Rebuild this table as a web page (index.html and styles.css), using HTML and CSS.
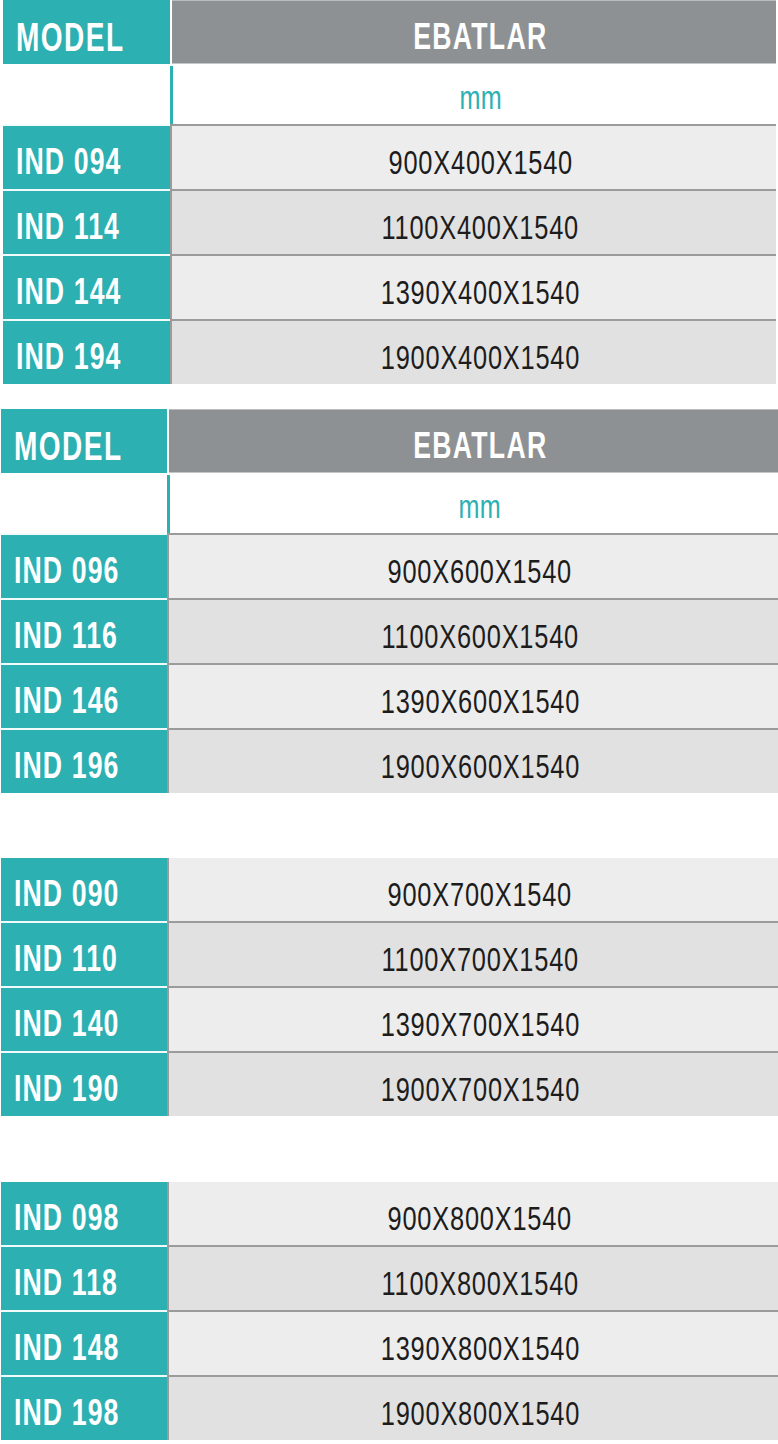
FILE: index.html
```html
<!DOCTYPE html>
<html lang="tr">
<head>
<meta charset="utf-8">
<title>Model Ebatlar</title>
<link rel="stylesheet" href="styles.css">
</head>
<body>
<div class="sheet">
  <section class="table table--first">
    <div class="row head"><div class="model"><span class="txt">MODEL</span></div><div class="value"><span class="txt">EBATLAR</span></div></div>
    <div class="row unit"><div class="model"></div><div class="value"><span class="txt">mm</span></div></div>
    <div class="row data light"><div class="model"><span class="txt">IND 094</span></div><div class="value"><span class="txt">900X400X1540</span></div></div>
    <div class="row data dark"><div class="model"><span class="txt">IND 114</span></div><div class="value"><span class="txt">1100X400X1540</span></div></div>
    <div class="row data light"><div class="model"><span class="txt">IND 144</span></div><div class="value"><span class="txt">1390X400X1540</span></div></div>
    <div class="row data dark"><div class="model"><span class="txt">IND 194</span></div><div class="value"><span class="txt">1900X400X1540</span></div></div>
  </section>

  <section class="table table--second">
    <div class="row head"><div class="model"><span class="txt">MODEL</span></div><div class="value"><span class="txt">EBATLAR</span></div></div>
    <div class="row unit"><div class="model"></div><div class="value"><span class="txt">mm</span></div></div>
    <div class="row data light"><div class="model"><span class="txt">IND 096</span></div><div class="value"><span class="txt">900X600X1540</span></div></div>
    <div class="row data dark"><div class="model"><span class="txt">IND 116</span></div><div class="value"><span class="txt">1100X600X1540</span></div></div>
    <div class="row data light"><div class="model"><span class="txt">IND 146</span></div><div class="value"><span class="txt">1390X600X1540</span></div></div>
    <div class="row data dark"><div class="model"><span class="txt">IND 196</span></div><div class="value"><span class="txt">1900X600X1540</span></div></div>
  </section>

  <section class="table table--third">
    <div class="row data light first"><div class="model"><span class="txt">IND 090</span></div><div class="value"><span class="txt">900X700X1540</span></div></div>
    <div class="row data dark"><div class="model"><span class="txt">IND 110</span></div><div class="value"><span class="txt">1100X700X1540</span></div></div>
    <div class="row data light"><div class="model"><span class="txt">IND 140</span></div><div class="value"><span class="txt">1390X700X1540</span></div></div>
    <div class="row data dark"><div class="model"><span class="txt">IND 190</span></div><div class="value"><span class="txt">1900X700X1540</span></div></div>
  </section>

  <section class="table table--fourth">
    <div class="row data light first"><div class="model"><span class="txt">IND 098</span></div><div class="value"><span class="txt">900X800X1540</span></div></div>
    <div class="row data dark"><div class="model"><span class="txt">IND 118</span></div><div class="value"><span class="txt">1100X800X1540</span></div></div>
    <div class="row data light"><div class="model"><span class="txt">IND 148</span></div><div class="value"><span class="txt">1390X800X1540</span></div></div>
    <div class="row data dark"><div class="model"><span class="txt">IND 198</span></div><div class="value"><span class="txt">1900X800X1540</span></div></div>
  </section>
</div>
</body>
</html>
```

FILE: styles.css
```css
html, body {
  margin: 0;
  padding: 0;
  background: #ffffff;
}

body {
  font-family: "Liberation Sans", Arial, sans-serif;
}

.sheet {
  width: 778px;
  display: flex;
  flex-direction: column;
}

.table {
  display: flex;
  flex-direction: column;
  margin-left: 1px;
}

.table--first {
  margin-left: 3px;
  margin-right: 2px;
}

.table--second {
  margin-top: 25px;
}

.table--third {
  margin-top: 65px;
}

.table--fourth {
  margin-top: 66px;
}

.row {
  display: flex;
}

.txt {
  display: inline-block;
  white-space: nowrap;
}

.model {
  flex: none;
  width: 166px;
  box-sizing: border-box;
  padding-left: 13px;
  display: flex;
  align-items: center;
  color: #ffffff;
  font-weight: 700;
  font-size: 36px;
  line-height: 1;
  background: #2cb0b2;
}

.model .txt {
  transform: scaleX(0.74);
  transform-origin: left center;
  letter-spacing: 1.5px;
}

.table--first .model {
  width: 167px;
}

.value {
  flex: 1;
  display: flex;
  align-items: center;
  justify-content: center;
  line-height: 1;
  box-sizing: border-box;
}

.value .txt {
  transform-origin: center center;
}

/* header row */
.head {
  height: 64px;
}

.head .model {
  padding-top: 10px;
  font-size: 40px;
}

.head .model .txt {
  transform: scaleX(0.7);
  letter-spacing: 2.1px;
}

.head .value {
  margin-left: 2px;
  background: #8e9194;
  color: #ffffff;
  font-weight: 700;
  font-size: 37px;
  padding-top: 8px;
  padding-left: 13px;
  border-top: 1px solid #b9bbbd;
  border-bottom: 1px solid #c4c6c8;
}

.head .value .txt {
  transform: scaleX(0.72);
  letter-spacing: 1.8px;
}

/* unit row */
.unit {
  height: 58px;
  margin-top: 2px;
}

.unit .model {
  background: transparent;
}

.unit .value {
  border-left: 3px solid #2cb0b2;
  color: #2cb0b2;
  font-size: 34px;
  padding-top: 4px;
  padding-left: 12px;
}

.unit .value .txt {
  transform: scaleX(0.74);
  letter-spacing: 0.5px;
}

/* data rows */
.data {
  height: 65px;
}

.data .model {
  border-top: 2px solid #f2fbfb;
  padding-top: 9px;
}

.data .value {
  border-top: 2px solid #9b9b9b;
  border-left: 2px solid #9b9b9b;
  font-size: 33px;
  color: #1c1c1c;
  padding-top: 9px;
  padding-left: 13px;
}

.data .value .txt {
  transform: scaleX(0.77);
  letter-spacing: 1px;
}

.data.first {
  height: 63px;
}

.data.first .model,
.data.first .value {
  border-top: none;
}

.light .value {
  background: #ededed;
}

.dark .value {
  background: #e1e1e1;
}
```
